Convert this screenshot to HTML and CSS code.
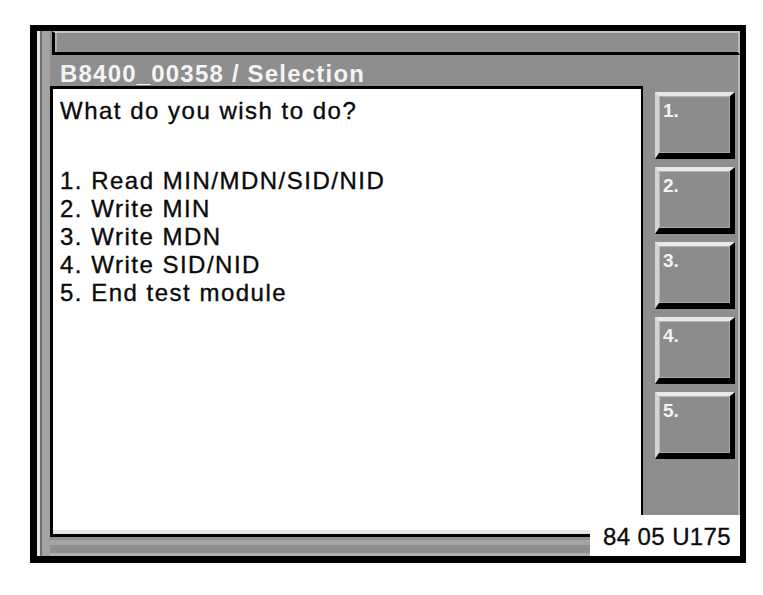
FILE: index.html
```html
<!DOCTYPE html>
<html>
<head>
<meta charset="utf-8">
<title>B8400_00358 / Selection</title>
<link rel="stylesheet" href="styles.css">
</head>
<body>
<div class="frame">
  <div class="rail"></div>
  <div class="main">
    <div class="topbar"></div>
    <div class="titlebar">B8400_00358 / Selection</div>
    <div class="body">
      <div class="content">
        <p class="question">What do you wish to do?</p>
        <ul class="options">
          <li>1. Read MIN/MDN/SID/NID</li>
          <li>2. Write MIN</li>
          <li>3. Write MDN</li>
          <li>4. Write SID/NID</li>
          <li>5. End test module</li>
        </ul>
      </div>
      <div class="panel">
        <div class="key">1.</div>
        <div class="key">2.</div>
        <div class="key">3.</div>
        <div class="key">4.</div>
        <div class="key">5.</div>
      </div>
    </div>
    <div class="bottombar"></div>
  </div>
  <div class="code">84 05 U175</div>
</div>
</body>
</html>
```
FILE: styles.css
```css
html, body {
  margin: 0;
  padding: 0;
  background: #ffffff;
}

body {
  font-family: "Liberation Sans", Arial, sans-serif;
}

.frame {
  position: relative;
  box-sizing: border-box;
  width: 716px;
  height: 538px;
  margin: 25px 0 0 30px;
  border-style: solid;
  border-color: #000;
  border-width: 6px 6px 7px 7px;
  background: #8e8e8e;
  display: flex;
}

.rail {
  width: 13px;
  flex: none;
  background: linear-gradient(to right, #e4e4e4 0 3px, #6e6e6e 3px 5px, #a2a2a2 5px 13px);
}

.main {
  flex: 1;
  display: flex;
  flex-direction: column;
}

.topbar {
  box-sizing: border-box;
  height: 24px;
  margin-left: 2px;
  border-top: 2px solid #c4c4c4;
  border-left: 3px solid #000;
  border-bottom: 3px solid #000;
  border-right: 2px solid #b8b8b8;
  background: #8e8e8e;
  box-shadow: inset 2px 0 0 #b0b0b0;
}

.titlebar {
  box-sizing: border-box;
  height: 31px;
  padding: 7px 0 0 10px;
  font-size: 24px;
  line-height: 24px;
  font-weight: bold;
  letter-spacing: 1.2px;
  color: #f4f4f4;
  white-space: nowrap;
  border-right: 2px solid #b8b8b8;
}

.body {
  flex: 1;
  display: flex;
}

.content {
  box-sizing: border-box;
  width: 593px;
  background: #fff;
  border-top: 3px solid #000;
  border-left: 3px solid #000;
  border-right: 2px solid #000;
  padding: 8px 0 0 7px;
  color: #0a0a0a;
  font-size: 24px;
  line-height: 28px;
  letter-spacing: 1.5px;
  -webkit-text-stroke: 0.35px #0a0a0a;
  box-shadow: inset 0 -4px 0 #e6e6e6;
}

.question {
  margin: 0 0 42px 0;
}

.options {
  list-style: none;
  margin: 0;
  padding: 0;
}

.panel {
  flex: 1;
  display: flex;
  flex-direction: column;
  gap: 8px;
  padding: 6px 3px 0 12px;
  border-right: 2px solid #b8b8b8;
}

.key {
  box-sizing: border-box;
  height: 67px;
  border-style: solid;
  border-width: 4px 5px 6px 4px;
  border-color: #e8e8e8 #000 #000 #d4d4d4;
  background: #8c8c8c;
  box-shadow: inset 1px 1px 0 #b4b4b4, inset -1px -1px 0 #a8a8a8;
  padding: 5px 0 0 4px;
  font-size: 19px;
  line-height: 19px;
  font-weight: bold;
  color: #f4f4f4;
}

.bottombar {
  box-sizing: border-box;
  height: 22px;
  border-top: 3px solid #000;
  background: linear-gradient(to bottom, #8e8e8e 0 3px, #a4a4a4 3px 8px, #8e8e8e 8px 16px, #b0b0b0 16px 19px);
}

.code {
  position: absolute;
  left: 553px;
  top: 484px;
  box-sizing: border-box;
  width: 150px;
  height: 41px;
  background: #fff;
  padding: 1px 0 0 13px;
  font-size: 24px;
  line-height: 41px;
  letter-spacing: 0.4px;
  color: #0a0a0a;
  -webkit-text-stroke: 0.3px #0a0a0a;
  white-space: nowrap;
}
```
